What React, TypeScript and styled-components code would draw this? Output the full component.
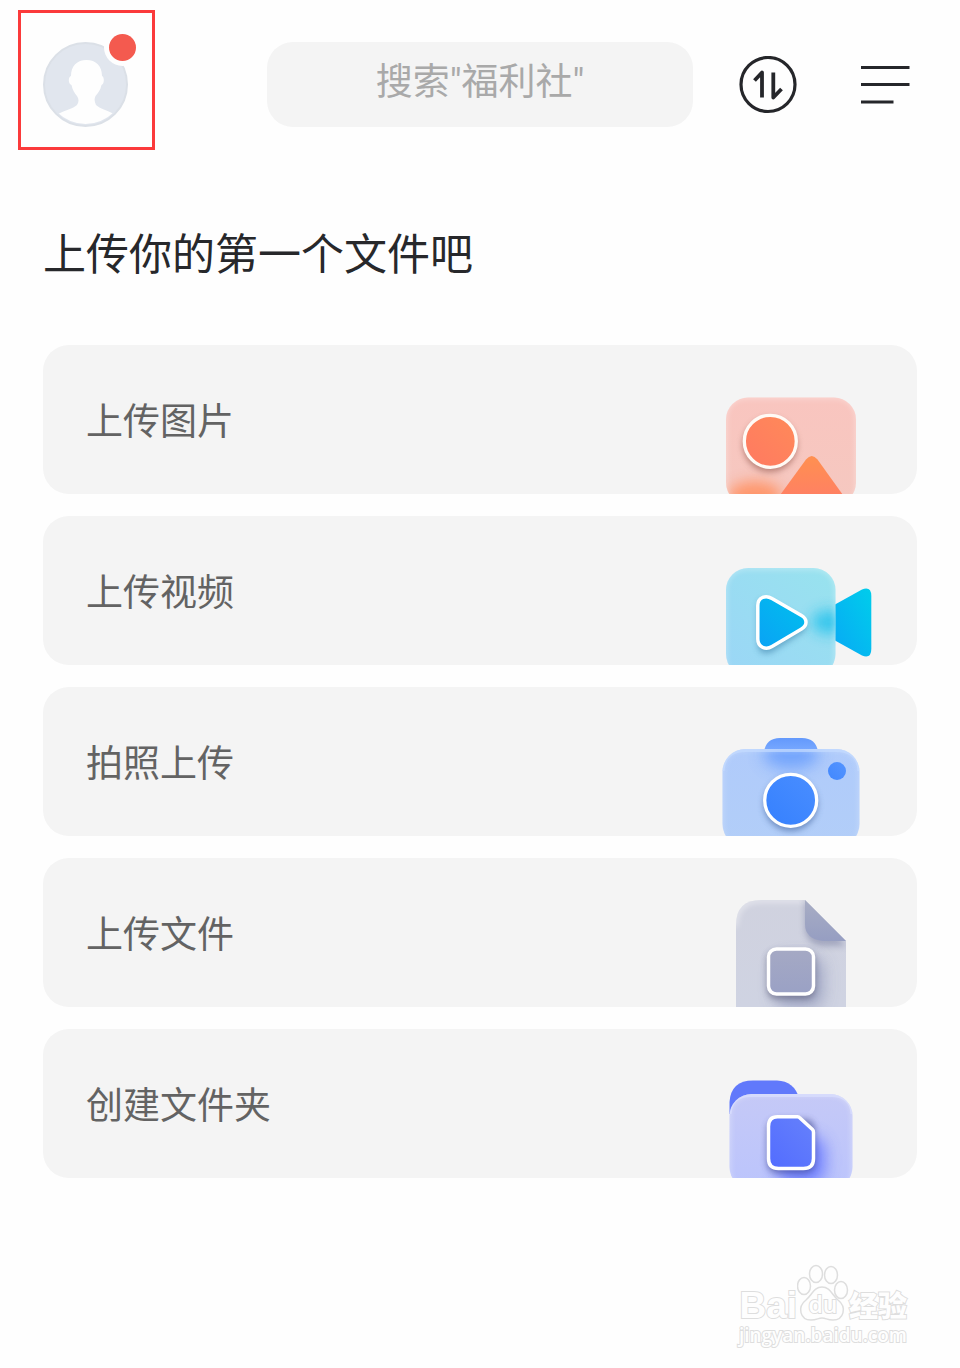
import React from "react";
import styled, { createGlobalStyle } from "styled-components";

const GlobalStyle = createGlobalStyle`
  *, *::before, *::after { box-sizing: border-box; }
  body {
    margin: 0;
    background: #fefefe;
    font-family: Roboto, "Noto Sans CJK SC", sans-serif;
    color: #27282b;
  }
  button { font: inherit; color: inherit; border: 0; padding: 0; background: none; cursor: pointer; }
  svg { display: block; }
`;

const Page = styled.main`
  padding: 42px 43px 20px;
`;

const TopBar = styled.header`
  display: flex;
  align-items: center;
`;

const AvatarButton = styled.button`
  position: relative;
  flex: none;
  width: 85px;
  height: 85px;
  svg { overflow: visible; }
`;

const Highlight = styled.span`
  position: absolute;
  inset: -32px -27px -23px -25px;
  border: 3px solid #fb3a3b;
  pointer-events: none;
`;

const SearchBox = styled.input`
  flex: 1;
  min-width: 0;
  height: 85px;
  margin: 0 46px 0 139px;
  padding: 0 24px 4px;
  border: 0;
  border-radius: 26px;
  background: #f4f4f4;
  font: inherit;
  font-size: 37px;
  text-align: center;
  &::placeholder { color: #a9a9a9; opacity: 1; }
`;

const IconButton = styled.button<{ $space?: number }>`
  flex: none;
  margin-right: ${(p) => p.$space ?? 0}px;
`;

const Title = styled.h1`
  margin: 97px 0 59px;
  font-size: 43px;
  line-height: 62px;
  font-weight: 400;
`;

const CardList = styled.ul`
  list-style: none;
  margin: 0;
  padding: 0;
  display: flex;
  flex-direction: column;
  gap: 22px;
`;

const Card = styled.button`
  display: flex;
  align-items: center;
  justify-content: space-between;
  width: 100%;
  height: 149px;
  padding: 0 42px 0 43px;
  border-radius: 26px;
  background: #f4f4f4;
  overflow: hidden;
  text-align: left;
`;

const CardLabel = styled.span`
  padding-top: 6px;
  font-size: 37px;
  line-height: 54px;
  color: #636363;
`;

const Art = styled.svg`
  flex: none;
  align-self: flex-end;
`;

const Watermark = styled.footer`
  display: flex;
  flex-direction: column;
  align-items: flex-end;
  margin-top: 86px;
  padding-right: 10px;
  font-family: "Open Sans", "Noto Sans CJK SC", sans-serif;
  color: #fefefe;
  -webkit-text-stroke: 2px #dedede;
  paint-order: stroke fill;
`;

const Brand = styled.div`
  display: flex;
  align-items: flex-end;
  font-size: 37px;
  line-height: 32px;
  font-weight: 700;
`;

const BrandName = styled.span`
  font-family: "Liberation Sans", sans-serif;
`;

const BrandTopic = styled.span`
  font-size: 29px;
  font-weight: 900;
`;

const Paw = styled.span`
  position: relative;
  width: 52px;
  height: 58px;
`;

const PawText = styled.span`
  position: absolute;
  left: 0;
  right: 0;
  top: 24px;
  text-align: center;
  font-size: 23px;
  line-height: 32px;
  font-weight: 600;
`;

const Site = styled.span`
  font-size: 19px;
  line-height: 26px;
  font-weight: 600;
`;

const Avatar = () => (
  <svg width="85" height="85" viewBox="0 0 85 85" aria-hidden="true">
    <defs>
      <clipPath id="face"><circle cx="42.5" cy="42.5" r="39.5" /></clipPath>
    </defs>
    <circle cx="42.5" cy="42.5" r="41.5" fill="#e1e6ee" stroke="#dbe0e7" strokeWidth="2" />
    <path
      clipPath="url(#face)"
      fill="#fefefe"
      d="M43.5 18C53 18 59 24 59 34C61.500 35 61.500 42 58.500 43C57.500 48 55 51 52.500 54C51 57 51.500 60 53 63C57 67 64 68 71 72L66 84H20L15 72C22 68 30 67 34 63C36 60 36 57 34 54C31.500 51 29.500 48 28.500 43C25 42 25 35 28 34C28 24 34 18 43.500 18Z"
    />
    <circle cx="79.5" cy="5.500" r="18.500" fill="#fefefe" />
    <circle cx="79.5" cy="5.500" r="13.500" fill="#f45a4f" />
  </svg>
);

const TransferIcon = () => (
  <svg width="58" height="58" viewBox="0 0 58 58" fill="none" stroke="#25262a" aria-hidden="true">
    <circle cx="29" cy="28.5" r="27" strokeWidth="3.200" />
    <path d="M15.500 24.500L23 16.500V41.500" strokeWidth="3.800" strokeLinejoin="round" />
    <path d="M34.300 16.500V41.500L42.500 33" strokeWidth="3.800" strokeLinejoin="round" />
  </svg>
);

const MenuIcon = () => (
  <svg width="49" height="58" viewBox="0 0 49 58" fill="none" stroke="#25262a" strokeWidth="3" aria-hidden="true">
    <path d="M0 11.500H48.500M0 28.500H48.500M0 46H32.500" />
  </svg>
);

const Soften = ({ id, by }: { id: string; by: number }) => (
  <filter id={id} x="-100%" y="-100%" width="300%" height="300%">
    <feGaussianBlur stdDeviation={by} />
  </filter>
);

const Fade = ({ id, from, to, diagonal }: { id: string; from: string; to: string; diagonal?: boolean }) => (
  <linearGradient id={id} x1={diagonal ? "1" : "0"} y1="0" x2="0" y2="1">
    <stop offset="0" stopColor={from} />
    <stop offset="1" stopColor={to} />
  </linearGradient>
);

const PictureArt = () => (
  <Art width="160" height="110" viewBox="0 0 160 110" aria-hidden="true">
    <defs>
      <Fade id="picBody" from="#f9c5bf" to="#f5c8c0" />
      <Fade id="picSun" from="#ff8a59" to="#ff7961" diagonal />
      <Fade id="picHill" from="#ff9050" to="#ff7e66" />
      <Soften id="picBlur" by={7} />
      <Soften id="picShade" by={3} />
      <clipPath id="picClip"><rect x="11" y="13.5" width="130" height="107" rx="22" /></clipPath>
    </defs>
    <rect x="11" y="13.5" width="130" height="107" rx="22" fill="url(#picBody)" />
    <g clipPath="url(#picClip)">
      <ellipse cx="40" cy="112" rx="27" ry="15" fill="#ff9468" opacity=".95" filter="url(#picBlur)" />
      <rect x="9" y="12" width="134" height="114" rx="22" fill="none" stroke="#fff" strokeWidth="4" opacity=".5" filter="url(#picShade)" />
      <path d="M60 118L91 75.500Q96.700 68.500 102.500 75.500L133 118Z" fill="url(#picHill)" />
    </g>
    <circle cx="55" cy="61" r="27" fill="#965a50" opacity=".65" filter="url(#picShade)" />
    <circle cx="55.300" cy="57.300" r="26" fill="url(#picSun)" stroke="#fffaf5" strokeWidth="3.300" />
  </Art>
);

const VideoArt = () => (
  <Art width="160" height="110" viewBox="0 0 160 110" aria-hidden="true">
    <defs>
      <Fade id="vidBody" from="#98e3ee" to="#9bd6f6" diagonal />
      <Fade id="vidPlay" from="#00c0ed" to="#0aa2f5" diagonal />
      <Fade id="vidWing" from="#00cdeb" to="#08a9f5" diagonal />
      <Soften id="vidBlur" by={7} />
      <Soften id="vidShade" by={3} />
      <clipPath id="vidClip"><rect x="11" y="13" width="109.500" height="108" rx="22" /></clipPath>
    </defs>
    <path d="M120 49.500L147 34.500Q156.300 31 156.300 41V94Q156.300 104 147 100.500L120 85.500Z" fill="url(#vidWing)" />
    <rect x="11" y="13" width="109.500" height="108" rx="22" fill="url(#vidBody)" />
    <g clipPath="url(#vidClip)">
      <ellipse cx="114" cy="67" rx="17" ry="12" fill="#25c2ec" opacity=".85" filter="url(#vidBlur)" />
      <rect x="9" y="12" width="113" height="114" rx="22" fill="none" stroke="#fff" strokeWidth="3" opacity=".6" filter="url(#vidShade)" />
    </g>
    <path d="M43 53Q43 42 54 46L88 65Q94 71 88 77L57 97Q43 102 43 88Z" fill="#3a7fa8" opacity=".6" filter="url(#vidShade)" />
    <path d="M42.800 50.500C42.800 42.500 50.500 39.500 57 43.500L86.500 60.500C92.500 64 92.500 70.500 86.500 74L57 91.500C50.500 95.500 42.800 92 42.800 84Z" fill="url(#vidPlay)" stroke="#fff" strokeWidth="3.500" />
  </Art>
);

const CameraArt = () => (
  <Art width="160" height="110" viewBox="0 0 160 110" aria-hidden="true">
    <defs>
      <Fade id="camBody" from="#b0cbfb" to="#b2cef8" />
      <Fade id="camLens" from="#4a8eff" to="#3580fe" diagonal />
      <Fade id="camTop" from="#6399fc" to="#7aaaff" />
      <Soften id="camBlur" by={8} />
      <Soften id="camShade" by={3} />
      <clipPath id="camClip"><rect x="7.500" y="23" width="137" height="98" rx="23" /></clipPath>
    </defs>
    <path d="M49 26Q51 12 65 12H87Q101 12 103 26Z" fill="url(#camTop)" />
    <rect x="7.500" y="23" width="137" height="98" rx="23" fill="url(#camBody)" />
    <g clipPath="url(#camClip)">
      <ellipse cx="76" cy="28" rx="28" ry="15" fill="#6fa2fc" opacity=".95" filter="url(#camBlur)" />
      <rect x="6" y="22" width="140" height="104" rx="23" fill="none" stroke="#d9e8ff" strokeWidth="3" opacity=".8" filter="url(#camShade)" />
      <path d="M8 45Q9 24.500 31 24.500H121Q143 24.500 144 45" fill="none" stroke="#c5dbff" strokeWidth="3" opacity=".65" />
    </g>
    <circle cx="122" cy="45" r="9" fill="url(#camLens)" opacity=".9" />
    <circle cx="75.700" cy="78" r="27" fill="#3d5f99" opacity=".6" filter="url(#camShade)" />
    <circle cx="75.700" cy="74.300" r="26" fill="url(#camLens)" stroke="#fff" strokeWidth="3.300" />
  </Art>
);

const FileArt = () => (
  <Art width="160" height="110" viewBox="0 0 160 110" aria-hidden="true">
    <defs>
      <Fade id="docBody" from="#d0d2df" to="#cfd3e2" />
      <Fade id="docMark" from="#a5a9c4" to="#9aa1c5" />
      <Fade id="docFold" from="#a8adc4" to="#969ec2" />
      <Soften id="docBlur" by={8} />
      <Soften id="docShade" by={3} />
      <clipPath id="docClip"><path d="M21 110V28Q21 3 46 3H90L131 44V110Z" /></clipPath>
    </defs>
    <g clipPath="url(#docClip)">
      <rect x="21" y="3" width="110" height="107" fill="url(#docBody)" />
      <path d="M20 30Q20 3 46 3H90" fill="none" stroke="#fff" strokeWidth="4" opacity=".6" filter="url(#docShade)" />
      <path d="M90 3V32Q92 48 108 49H131Z" fill="#8388a8" opacity=".6" filter="url(#docShade)" />
      <rect x="60" y="60" width="48" height="50" rx="12" fill="#969dbd" opacity=".85" filter="url(#docBlur)" />
    </g>
    <path d="M90 3L131 44H108Q90 42 90 27Z" fill="url(#docFold)" />
    <rect x="52" y="54" width="48" height="48" rx="9" fill="#5e617c" opacity=".6" filter="url(#docShade)" />
    <rect x="53.500" y="52" width="45" height="45" rx="8" fill="url(#docMark)" stroke="#fff" strokeWidth="3.500" />
  </Art>
);

const FolderArt = () => (
  <Art width="160" height="110" viewBox="0 0 160 110" aria-hidden="true">
    <defs>
      <Fade id="dirBody" from="#c5c9f7" to="#bbc4fc" />
      <Fade id="dirMark" from="#6681fb" to="#526cff" diagonal />
      <Soften id="dirBlur" by={8} />
      <Soften id="dirShade" by={3} />
      <clipPath id="dirClip"><rect x="14.500" y="26" width="123" height="95" rx="22" /></clipPath>
    </defs>
    <path d="M14.500 46V34Q16 12.500 38 12.500H62Q79 13 84 30V46Z" fill="#6179fb" />
    <rect x="14.500" y="26" width="123" height="95" rx="22" fill="url(#dirBody)" />
    <g clipPath="url(#dirClip)">
      <rect x="62" y="68" width="48" height="48" rx="15" fill="#6374ff" opacity=".85" filter="url(#dirBlur)" />
      <rect x="13" y="25" width="126" height="100" rx="22" fill="none" stroke="#fff" strokeWidth="3" opacity=".6" filter="url(#dirShade)" />
      <path d="M15 46Q16 27.500 36 27.500H116Q136 27.500 137 46" fill="none" stroke="#dce1ff" strokeWidth="3" opacity=".6" />
    </g>
    <rect x="52" y="51" width="48" height="54" rx="10" fill="#42498c" opacity=".6" filter="url(#dirShade)" />
    <path d="M62.500 48.800H82.500Q84 48.800 85 50L97.500 61.500Q98.500 62.500 98.500 64.500V90.500Q98.500 100.500 88.500 100.500H63.500Q53.500 100.500 53.500 90.500V58.500Q53.500 48.800 62.500 48.800Z" fill="url(#dirMark)" stroke="#fff" strokeWidth="3.500" />
  </Art>
);

const uploads = [
  { label: "上传图片", Picture: PictureArt },
  { label: "上传视频", Picture: VideoArt },
  { label: "拍照上传", Picture: CameraArt },
  { label: "上传文件", Picture: FileArt },
  { label: "创建文件夹", Picture: FolderArt },
];

export default function App() {
  return (
    <>
      <GlobalStyle />
      <Page>
        <TopBar>
          <AvatarButton type="button" aria-label="个人中心">
            <Avatar />
            <Highlight />
          </AvatarButton>
          <SearchBox type="text" aria-label="搜索" placeholder={'搜索"福利社"'} />
          <IconButton type="button" aria-label="传输列表" $space={64}>
            <TransferIcon />
          </IconButton>
          <IconButton type="button" aria-label="菜单" $space={7}>
            <MenuIcon />
          </IconButton>
        </TopBar>
        <Title>上传你的第一个文件吧</Title>
        <CardList>
          {uploads.map(({ label, Picture }) => (
            <li key={label}>
              <Card type="button">
                <CardLabel>{label}</CardLabel>
                <Picture />
              </Card>
            </li>
          ))}
        </CardList>
        <Watermark>
          <Brand>
            <BrandName>Bai</BrandName>
            <Paw>
              <svg width="52" height="58" viewBox="0 0 52 58" fill="none" stroke="#dedede" strokeWidth="1.500" aria-hidden="true">
                <ellipse cx="7" cy="22" rx="6.500" ry="8.500" />
                <ellipse cx="19" cy="10" rx="6.500" ry="8.500" />
                <ellipse cx="34" cy="11" rx="6.500" ry="8.500" />
                <ellipse cx="44" cy="26" rx="6.500" ry="8.500" />
                <path d="M25 23C33 23 35 31 41 36C50 43 47 56 36 56C30 56 29 54 25 54C21 54 20 56 14 56C3 56 0 43 9 36C15 31 17 23 25 23Z" />
              </svg>
              <PawText>du</PawText>
            </Paw>
            <BrandTopic>经验</BrandTopic>
          </Brand>
          <Site>jingyan.baidu.com</Site>
        </Watermark>
      </Page>
    </>
  );
}
